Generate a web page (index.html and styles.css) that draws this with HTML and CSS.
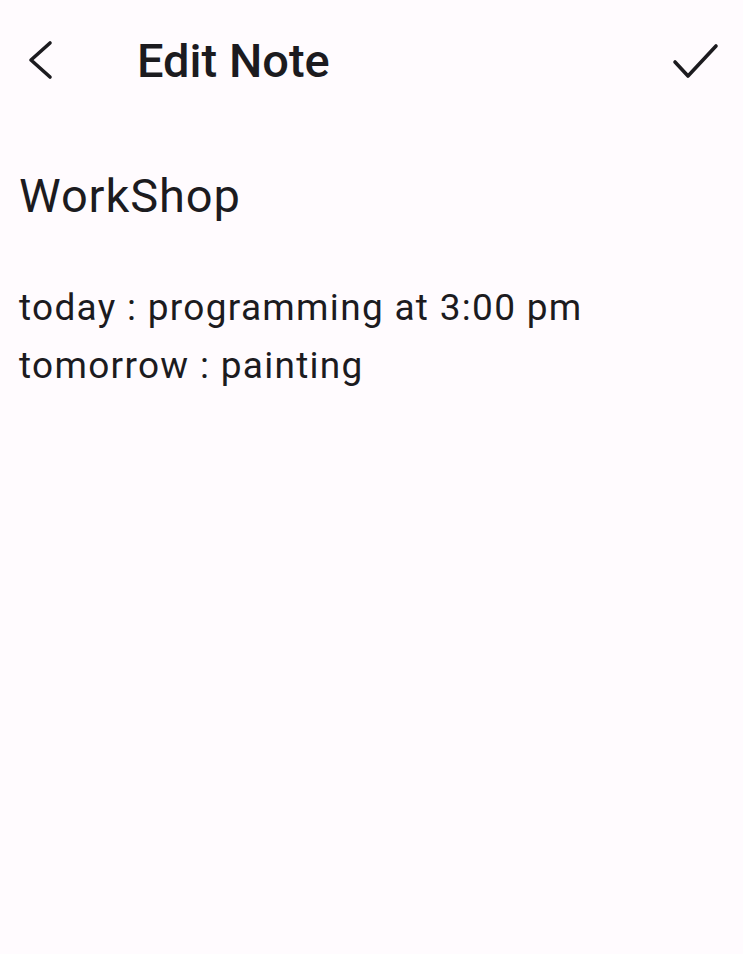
FILE: index.html
```html
<!DOCTYPE html>
<html>
<head>
<meta charset="utf-8">
<link rel="stylesheet" href="styles.css">
</head>
<body>
<div class="screen">
  <header class="appbar">
    <button class="icon-btn back" aria-label="Back">
      <svg width="48" height="48" viewBox="0 0 48 48"><path d="M34 7 L15 24 L34 41" fill="none" stroke="#1c1b1f" stroke-width="3.6" stroke-linecap="round" stroke-linejoin="round"/></svg>
    </button>
    <h1 class="title">Edit Note</h1>
    <button class="icon-btn check" aria-label="Save">
      <svg width="52" height="52" viewBox="0 0 52 52"><path d="M5 28 L18 42 L46 12" fill="none" stroke="#1c1b1f" stroke-width="3.6" stroke-linecap="round" stroke-linejoin="round"/></svg>
    </button>
  </header>
  <main class="content">
    <div class="note-title">WorkShop</div>
    <div class="note-body">
      <p>today : programming at 3:00 pm</p>
      <p>tomorrow : painting</p>
    </div>
  </main>
</div>
</body>
</html>
```
FILE: styles.css
```css
html, body {
  margin: 0;
  padding: 0;
  background: #fffbfe;
}
body {
  font-family: Roboto, "Noto Sans", sans-serif;
  color: #1c1b1f;
  width: 743px;
  height: 954px;
  overflow: hidden;
}
.appbar {
  display: flex;
  align-items: center;
  height: 120px;
  padding: 0 21px 0 16px;
}
.icon-btn {
  background: none;
  border: none;
  padding: 0;
  display: flex;
  align-items: center;
  justify-content: center;
}
.back { width: 48px; height: 48px; }
.title {
  margin: 0 0 0 73px;
  font-size: 47px;
  font-weight: 500;
  flex: 1;
  letter-spacing: 0;
}
.check { width: 52px; height: 52px; }
.content {
  padding: 0 19px;
}
.note-title {
  font-size: 47px;
  line-height: 56px;
  letter-spacing: 0.9px;
  margin-top: 48px;
}
.note-body {
  margin-top: 55px;
  font-size: 37px;
  line-height: 58px;
  letter-spacing: 1.3px;
}
.note-body p { margin: 0; }
```
